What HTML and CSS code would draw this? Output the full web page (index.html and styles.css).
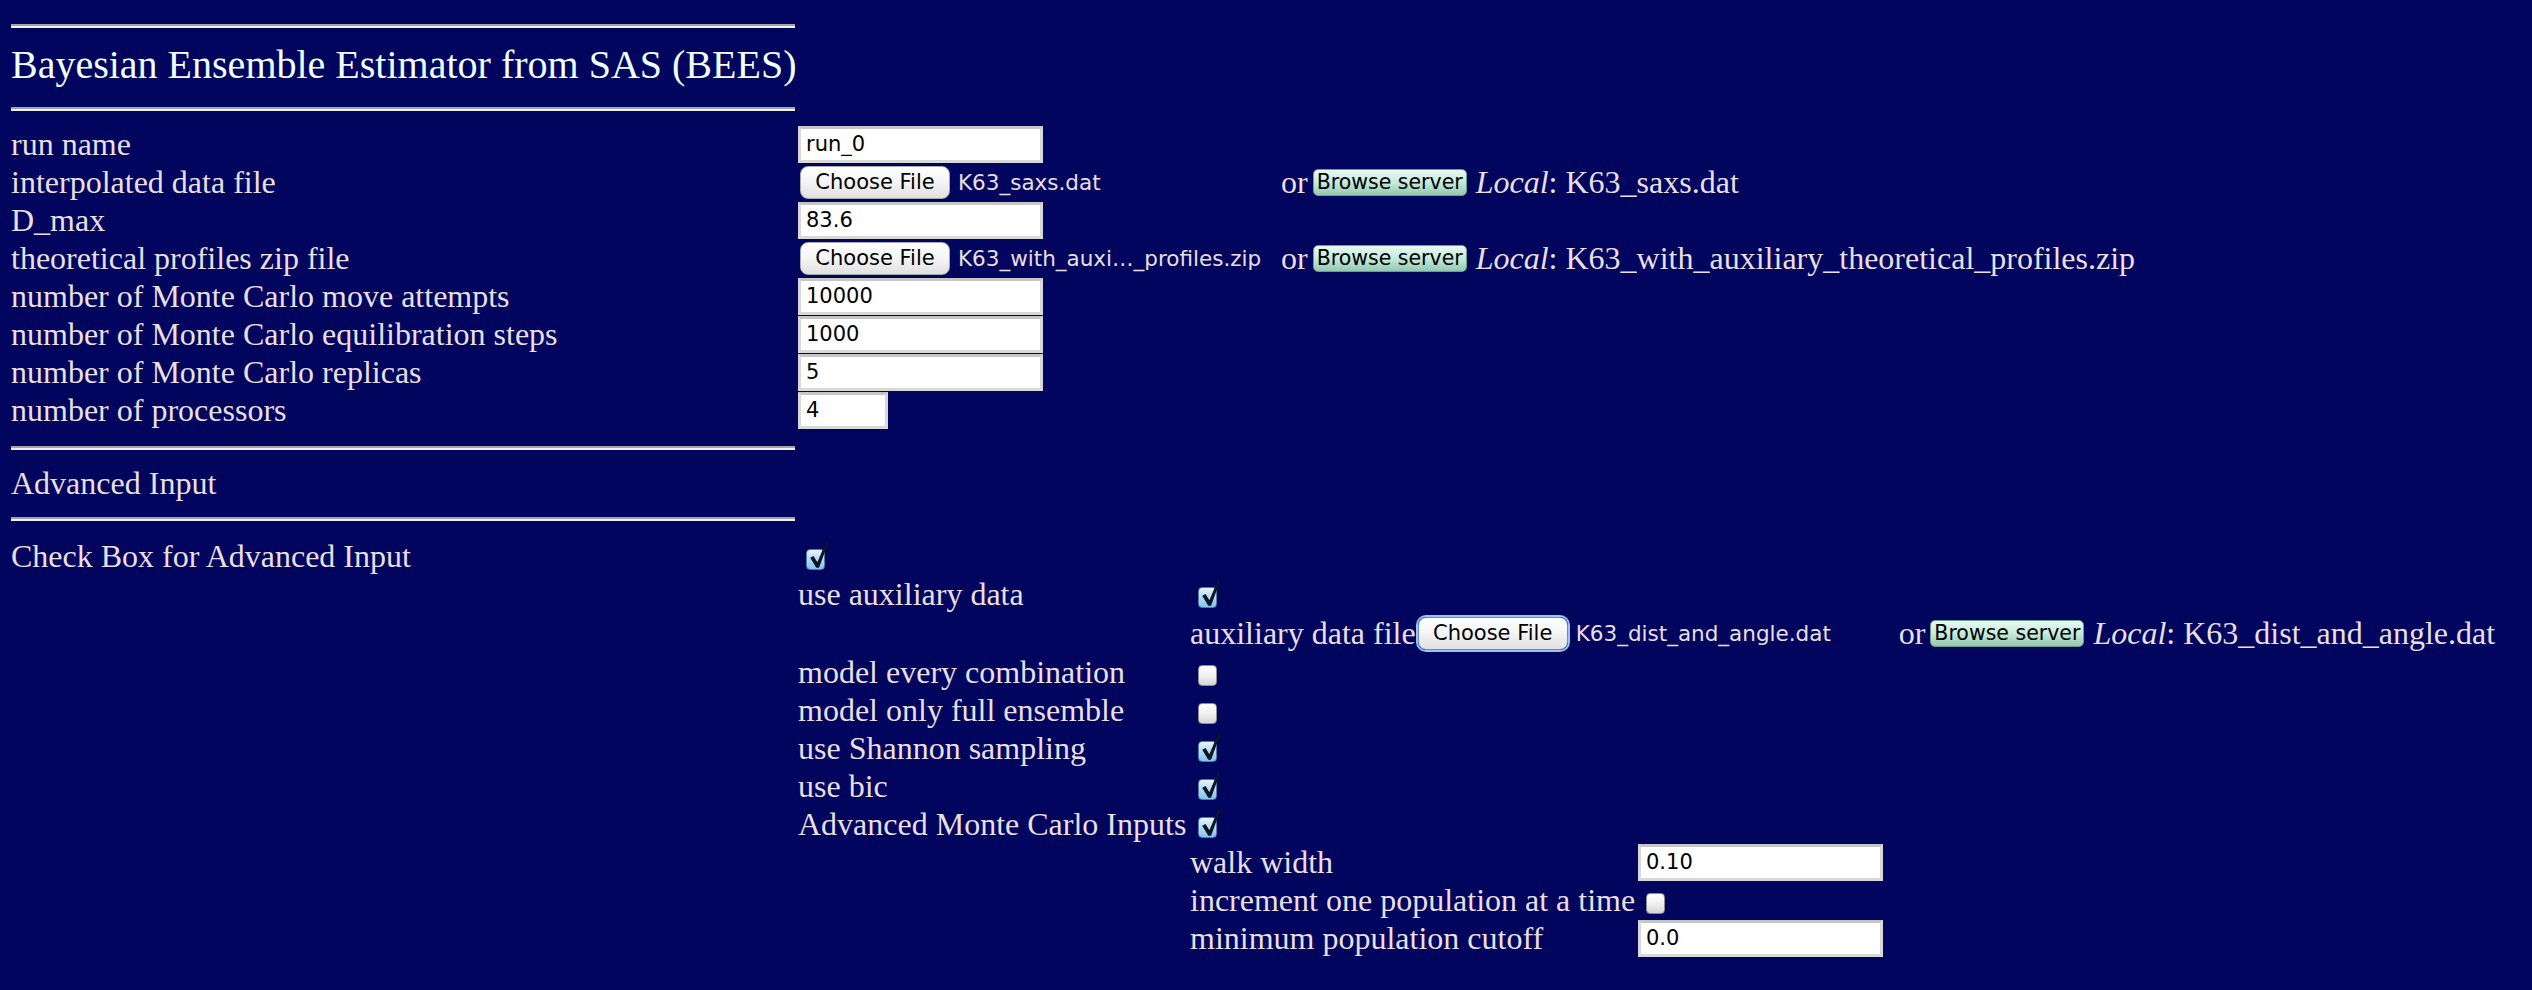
FILE: index.html
```html
<!DOCTYPE html>
<html lang="en">
<head>
    <meta charset="UTF-8">
    <title>BEES</title>
    <link rel="stylesheet" href="styles.css">
</head>
<body>
<div class="page">
    <hr class="rule">
    <h1 class="title">Bayesian Ensemble Estimator from SAS (BEES)</h1>
    <hr class="rule">

    <div class="form main">
        <div class="cell">run name</div>
        <div class="cell"><input class="text" type="text" value="run_0"></div>

        <div class="cell">interpolated data file</div>
        <div class="cell">
            <div class="file"><button class="choose">Choose File</button><span class="fname">K63_saxs.dat</span></div>
            <span class="or">or</span>
            <button class="browse">Browse server</button>
            <span class="local"><i>Local</i>: K63_saxs.dat</span>
        </div>

        <div class="cell">D_max</div>
        <div class="cell"><input class="text" type="text" value="83.6"></div>

        <div class="cell">theoretical profiles zip file</div>
        <div class="cell">
            <div class="file"><button class="choose">Choose File</button><span class="fname">K63_with_auxi…_profiles.zip</span></div>
            <span class="or">or</span>
            <button class="browse">Browse server</button>
            <span class="local"><i>Local</i>: K63_with_auxiliary_theoretical_profiles.zip</span>
        </div>

        <div class="cell">number of Monte Carlo move attempts</div>
        <div class="cell"><input class="text" type="text" value="10000"></div>

        <div class="cell">number of Monte Carlo equilibration steps</div>
        <div class="cell"><input class="text" type="text" value="1000"></div>

        <div class="cell">number of Monte Carlo replicas</div>
        <div class="cell"><input class="text" type="text" value="5"></div>

        <div class="cell">number of processors</div>
        <div class="cell"><input class="text short" type="text" value="4"></div>
    </div>

    <hr class="rule">
    <div class="section">Advanced Input</div>
    <hr class="rule">

    <div class="form adv">
        <div class="cell">Check Box for Advanced Input</div>
        <div class="cell"><span class="cb on"><svg viewBox="0 0 19 26"><polygon points="2,15 5,13.5 8.5,19 16.5,0 18.5,1 10,24 7.5,24"/></svg></span></div>

        <div></div>
        <div class="sub">
            <div class="cell">use auxiliary data</div>
            <div class="cell"><span class="cb on"><svg viewBox="0 0 19 26"><polygon points="2,15 5,13.5 8.5,19 16.5,0 18.5,1 10,24 7.5,24"/></svg></span></div>

            <div></div>
            <div class="cell tall">
                <span>auxiliary data file</span>
                <div class="file"><button class="choose focus">Choose File</button><span class="fname">K63_dist_and_angle.dat</span></div>
                <span class="or">or</span>
                <button class="browse">Browse server</button>
                <span class="local"><i>Local</i>: K63_dist_and_angle.dat</span>
            </div>

            <div class="cell">model every combination</div>
            <div class="cell"><span class="cb"></span></div>

            <div class="cell">model only full ensemble</div>
            <div class="cell"><span class="cb"></span></div>

            <div class="cell">use Shannon sampling</div>
            <div class="cell"><span class="cb on"><svg viewBox="0 0 19 26"><polygon points="2,15 5,13.5 8.5,19 16.5,0 18.5,1 10,24 7.5,24"/></svg></span></div>

            <div class="cell">use bic</div>
            <div class="cell"><span class="cb on"><svg viewBox="0 0 19 26"><polygon points="2,15 5,13.5 8.5,19 16.5,0 18.5,1 10,24 7.5,24"/></svg></span></div>

            <div class="cell">Advanced Monte Carlo Inputs</div>
            <div class="cell"><span class="cb on"><svg viewBox="0 0 19 26"><polygon points="2,15 5,13.5 8.5,19 16.5,0 18.5,1 10,24 7.5,24"/></svg></span></div>

            <div></div>
            <div class="sub2">
                <div class="cell">walk width</div>
                <div class="cell"><input class="text" type="text" value="0.10"></div>

                <div class="cell">increment one population at a time</div>
                <div class="cell"><span class="cb"></span></div>

                <div class="cell">minimum population cutoff</div>
                <div class="cell"><input class="text" type="text" value="0.0"></div>
            </div>
        </div>
    </div>
</div>
</body>
</html>
```

FILE: styles.css
```css
* {
    box-sizing: border-box;
}

body {
    margin: 0;
    background: #01055e;
    color: #e9dfe1;
    font-family: "Liberation Serif", "Times New Roman", serif;
    font-size: 32px;
}

.page {
    padding: 24px 0 0 11px;
}

.rule {
    width: 784px;
    height: 0;
    margin: 0;
    border: 0;
    border-top: 2px solid #a4a4a4;
    border-bottom: 2px solid #efefef;
}

.title {
    margin: 14px 0 19px;
    font-size: 40px;
    font-weight: normal;
    line-height: 46px;
    color: #f0ffff;
}

.section {
    margin: 14px 0 15px;
    line-height: 38px;
}

.form {
    display: grid;
    grid-template-columns: 787px auto;
    justify-items: start;
}

.main {
    margin: 14px 0 17px;
}

.adv {
    margin-top: 16px;
}

.sub {
    display: grid;
    grid-template-columns: 392px auto;
    justify-items: start;
}

.sub2 {
    display: grid;
    grid-template-columns: 448px auto;
    justify-items: start;
}

.cell {
    height: 38px;
    display: flex;
    align-items: center;
    white-space: nowrap;
}

.cell.tall {
    height: 40px;
}

.text {
    width: 245px;
    height: 37px;
    padding: 0 0 0 5px;
    border: 3px solid #d8d8d8;
    border-top-color: #c6c6c6;
    background: #fff;
    color: #000;
    font-family: "DejaVu Sans", sans-serif;
    font-size: 21px;
    outline: none;
}

.text.short {
    width: 90px;
}

.file {
    width: 475px;
    display: flex;
    align-items: center;
    font-family: "DejaVu Sans", sans-serif;
    font-size: 21.5px;
}

.choose {
    width: 150px;
    height: 33px;
    margin-left: 2px;
    padding: 0;
    border: 1px solid #a9a9a9;
    border-radius: 8px;
    background: linear-gradient(#ffffff, #f4f4f4 50%, #e0e0e0);
    color: #000;
    font-family: "DejaVu Sans", sans-serif;
    font-size: 21px;
}

.choose.focus {
    border-color: #5d90d2;
    box-shadow: 0 0 0 2px #9cc3ee;
}

.fname {
    margin-left: 8px;
    color: #e9dfe1;
}

.or {
    margin-left: 8px;
}

.browse {
    height: 27px;
    margin-left: 5px;
    padding: 0 3px;
    border: 1px solid #6f9e88;
    border-radius: 5px;
    background: linear-gradient(#e8faf2, #c4eadb 50%, #92c9af);
    color: #000;
    font-family: "DejaVu Sans", sans-serif;
    font-size: 20.5px;
    line-height: 25px;
}

.local {
    margin-left: 9px;
}

.cb {
    position: relative;
    width: 19px;
    height: 21px;
    margin: 6px 0 0 8px;
    border: 1px solid #8c8c8c;
    border-radius: 4px;
    background: linear-gradient(#ffffff, #f0f0f0 50%, #d6d6d6);
}

.cb.on {
    border-color: #4f7ea8;
    background: linear-gradient(#e8f4fd, #b4dbf5 50%, #86c2ec);
}

.cb svg {
    position: absolute;
    left: 1px;
    top: -9px;
    width: 21px;
    height: 29px;
    fill: #0d1522;
}
```
